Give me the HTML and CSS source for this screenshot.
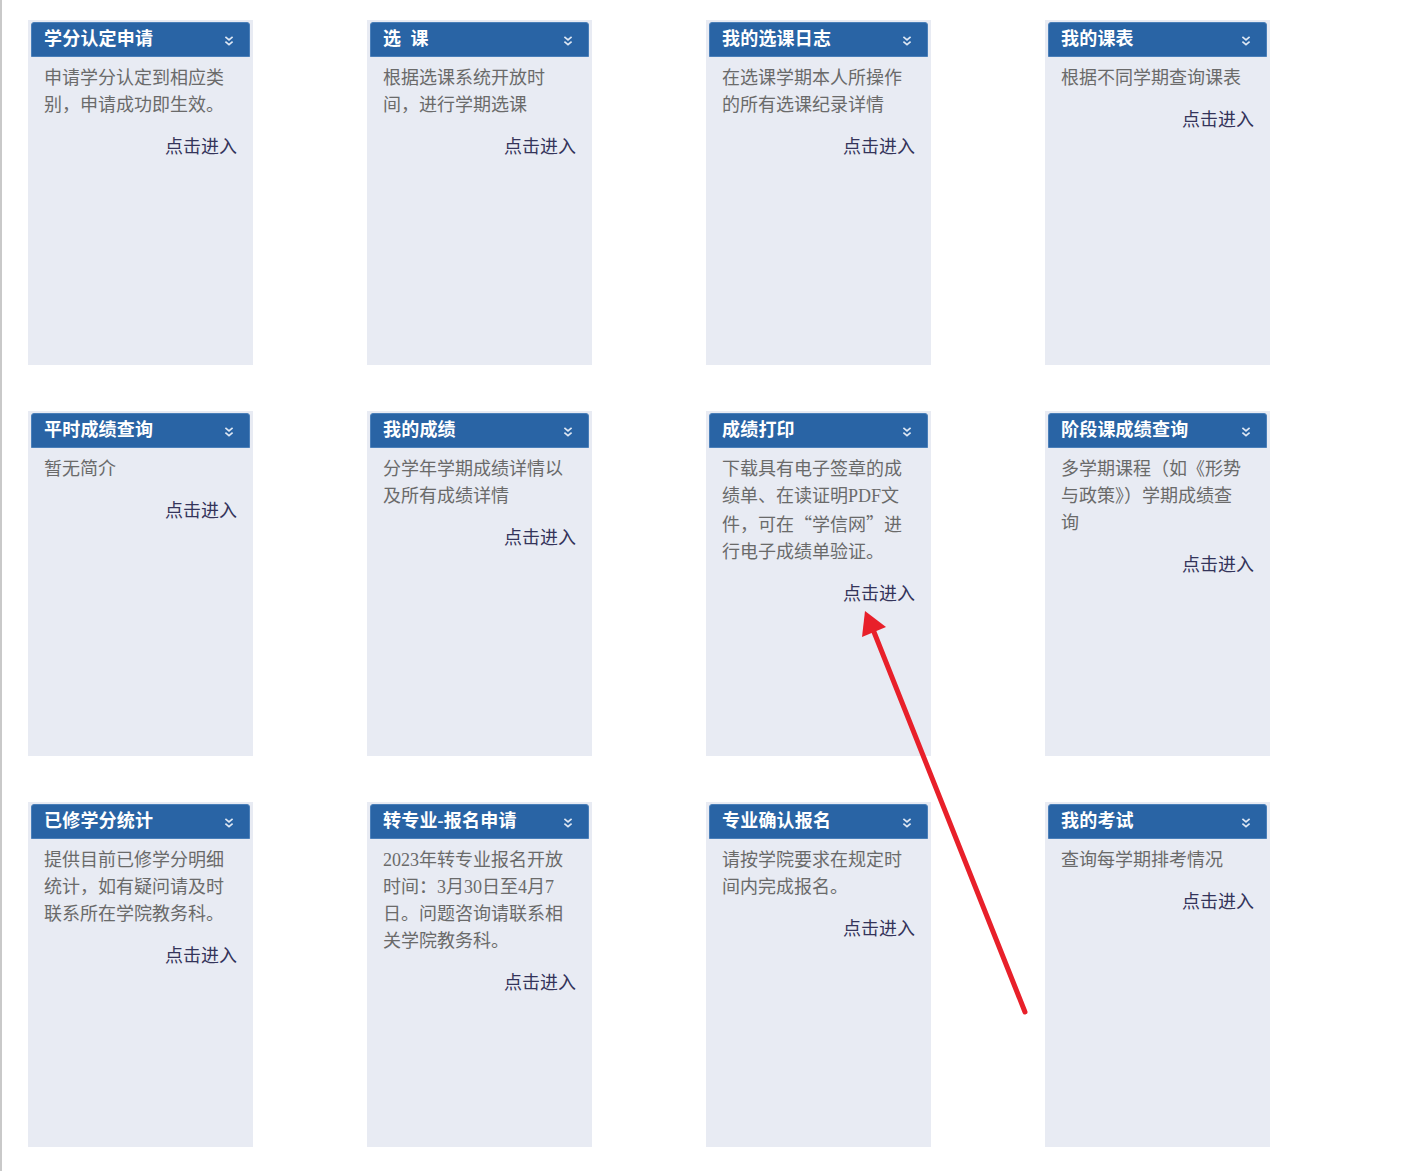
FILE: index.html
```html
<!DOCTYPE html>
<html lang="zh-CN">
<head>
<meta charset="utf-8">
<title>功能列表</title>
<link rel="stylesheet" href="styles.css">
</head>
<body>
<div class="page">
  <div class="grid">
    <div class="card">
      <div class="card-head"><span class="title">学分认定申请</span><svg class="chev" viewBox="0 0 10 10"><path d="M2 1.5 L5 4 L8 1.5 M2 5.5 L5 8 L8 5.5"/></svg></div>
      <p class="desc">申请学分认定到相应类别，申请成功即生效。</p>
      <div class="enter">点击进入</div>
    </div>
    <div class="card">
      <div class="card-head"><span class="title">选&nbsp;&nbsp;课</span><svg class="chev" viewBox="0 0 10 10"><path d="M2 1.5 L5 4 L8 1.5 M2 5.5 L5 8 L8 5.5"/></svg></div>
      <p class="desc">根据选课系统开放时间，进行学期选课</p>
      <div class="enter">点击进入</div>
    </div>
    <div class="card">
      <div class="card-head"><span class="title">我的选课日志</span><svg class="chev" viewBox="0 0 10 10"><path d="M2 1.5 L5 4 L8 1.5 M2 5.5 L5 8 L8 5.5"/></svg></div>
      <p class="desc">在选课学期本人所操作的所有选课纪录详情</p>
      <div class="enter">点击进入</div>
    </div>
    <div class="card">
      <div class="card-head"><span class="title">我的课表</span><svg class="chev" viewBox="0 0 10 10"><path d="M2 1.5 L5 4 L8 1.5 M2 5.5 L5 8 L8 5.5"/></svg></div>
      <p class="desc">根据不同学期查询课表</p>
      <div class="enter">点击进入</div>
    </div>

    <div class="card">
      <div class="card-head"><span class="title">平时成绩查询</span><svg class="chev" viewBox="0 0 10 10"><path d="M2 1.5 L5 4 L8 1.5 M2 5.5 L5 8 L8 5.5"/></svg></div>
      <p class="desc">暂无简介</p>
      <div class="enter">点击进入</div>
    </div>
    <div class="card">
      <div class="card-head"><span class="title">我的成绩</span><svg class="chev" viewBox="0 0 10 10"><path d="M2 1.5 L5 4 L8 1.5 M2 5.5 L5 8 L8 5.5"/></svg></div>
      <p class="desc">分学年学期成绩详情以及所有成绩详情</p>
      <div class="enter">点击进入</div>
    </div>
    <div class="card">
      <div class="card-head"><span class="title">成绩打印</span><svg class="chev" viewBox="0 0 10 10"><path d="M2 1.5 L5 4 L8 1.5 M2 5.5 L5 8 L8 5.5"/></svg></div>
      <p class="desc">下载具有电子签章的成绩单、在读证明PDF文件，可在<span class="fw">“</span>学信网<span class="fw">”</span>进行电子成绩单验证。</p>
      <div class="enter">点击进入</div>
    </div>
    <div class="card">
      <div class="card-head"><span class="title">阶段课成绩查询</span><svg class="chev" viewBox="0 0 10 10"><path d="M2 1.5 L5 4 L8 1.5 M2 5.5 L5 8 L8 5.5"/></svg></div>
      <p class="desc">多学期课程（如《形势与政策》）学期成绩查询</p>
      <div class="enter">点击进入</div>
    </div>

    <div class="card">
      <div class="card-head"><span class="title">已修学分统计</span><svg class="chev" viewBox="0 0 10 10"><path d="M2 1.5 L5 4 L8 1.5 M2 5.5 L5 8 L8 5.5"/></svg></div>
      <p class="desc">提供目前已修学分明细统计，如有疑问请及时联系所在学院教务科。</p>
      <div class="enter">点击进入</div>
    </div>
    <div class="card">
      <div class="card-head"><span class="title">转专业-报名申请</span><svg class="chev" viewBox="0 0 10 10"><path d="M2 1.5 L5 4 L8 1.5 M2 5.5 L5 8 L8 5.5"/></svg></div>
      <p class="desc">2023年转专业报名开放时间：3月30日至4月7日。问题咨询请联系相关学院教务科。</p>
      <div class="enter">点击进入</div>
    </div>
    <div class="card">
      <div class="card-head"><span class="title">专业确认报名</span><svg class="chev" viewBox="0 0 10 10"><path d="M2 1.5 L5 4 L8 1.5 M2 5.5 L5 8 L8 5.5"/></svg></div>
      <p class="desc">请按学院要求在规定时间内完成报名。</p>
      <div class="enter">点击进入</div>
    </div>
    <div class="card">
      <div class="card-head"><span class="title">我的考试</span><svg class="chev" viewBox="0 0 10 10"><path d="M2 1.5 L5 4 L8 1.5 M2 5.5 L5 8 L8 5.5"/></svg></div>
      <p class="desc">查询每学期排考情况</p>
      <div class="enter">点击进入</div>
    </div>
  </div>
  <svg class="annot-arrow" width="1425" height="1171" viewBox="0 0 1425 1171">
    <line x1="1025" y1="1012" x2="874" y2="632" stroke="#e8202a" stroke-width="5" stroke-linecap="round"/>
    <polygon points="865,611 862,637 886,627" fill="#e8202a"/>
  </svg>
</div>
</body>
</html>
```

FILE: styles.css
```css
html, body {
  margin: 0;
  padding: 0;
  background: #ffffff;
}

body {
  font-family: "Liberation Serif", "Noto Sans CJK SC", serif;
  width: 1425px;
  height: 1171px;
  overflow: hidden;
}

.page {
  position: relative;
  height: 1171px;
  box-sizing: border-box;
  border-left: 2px solid #c9c9c9;
  padding: 20px 0 0 26px;
}

.grid {
  display: grid;
  grid-template-columns: repeat(4, 225px);
  grid-auto-rows: 345px;
  column-gap: 114px;
  row-gap: 46px;
}

.card {
  background: #e8ebf3;
  padding: 2px 3px 0 3px;
  box-sizing: border-box;
  display: flex;
  flex-direction: column;
}

.card-head {
  height: 35px;
  box-sizing: border-box;
  background: #2964a5;
  border: 1px solid #4a7fb9;
  border-radius: 3px 3px 0 0;
  display: flex;
  align-items: center;
  justify-content: space-between;
  padding: 0 14px 2px 12px;
}

.title {
  color: #ffffff;
  font-size: 18px;
  font-weight: bold;
  letter-spacing: 0.2px;
  line-height: 1;
}

.chev {
  width: 12px;
  height: 12px;
  margin-top: 5px;
}

.chev path {
  fill: none;
  stroke: #dfe8f4;
  stroke-width: 1.4;
}

.desc {
  margin: 8px 0 0 13px;
  width: 181px;
  font-size: 18px;
  line-height: 27px;
  color: #6a6a6a;
  line-break: strict;
}

.fw {
  font-family: "Noto Sans CJK SC", sans-serif;
}

.enter {
  margin: 15px 13px 0 0;
  text-align: right;
  font-size: 18px;
  line-height: 27px;
  color: #34345a;
}

.annot-arrow {
  position: absolute;
  left: -2px;
  top: 0;
  pointer-events: none;
}
```
